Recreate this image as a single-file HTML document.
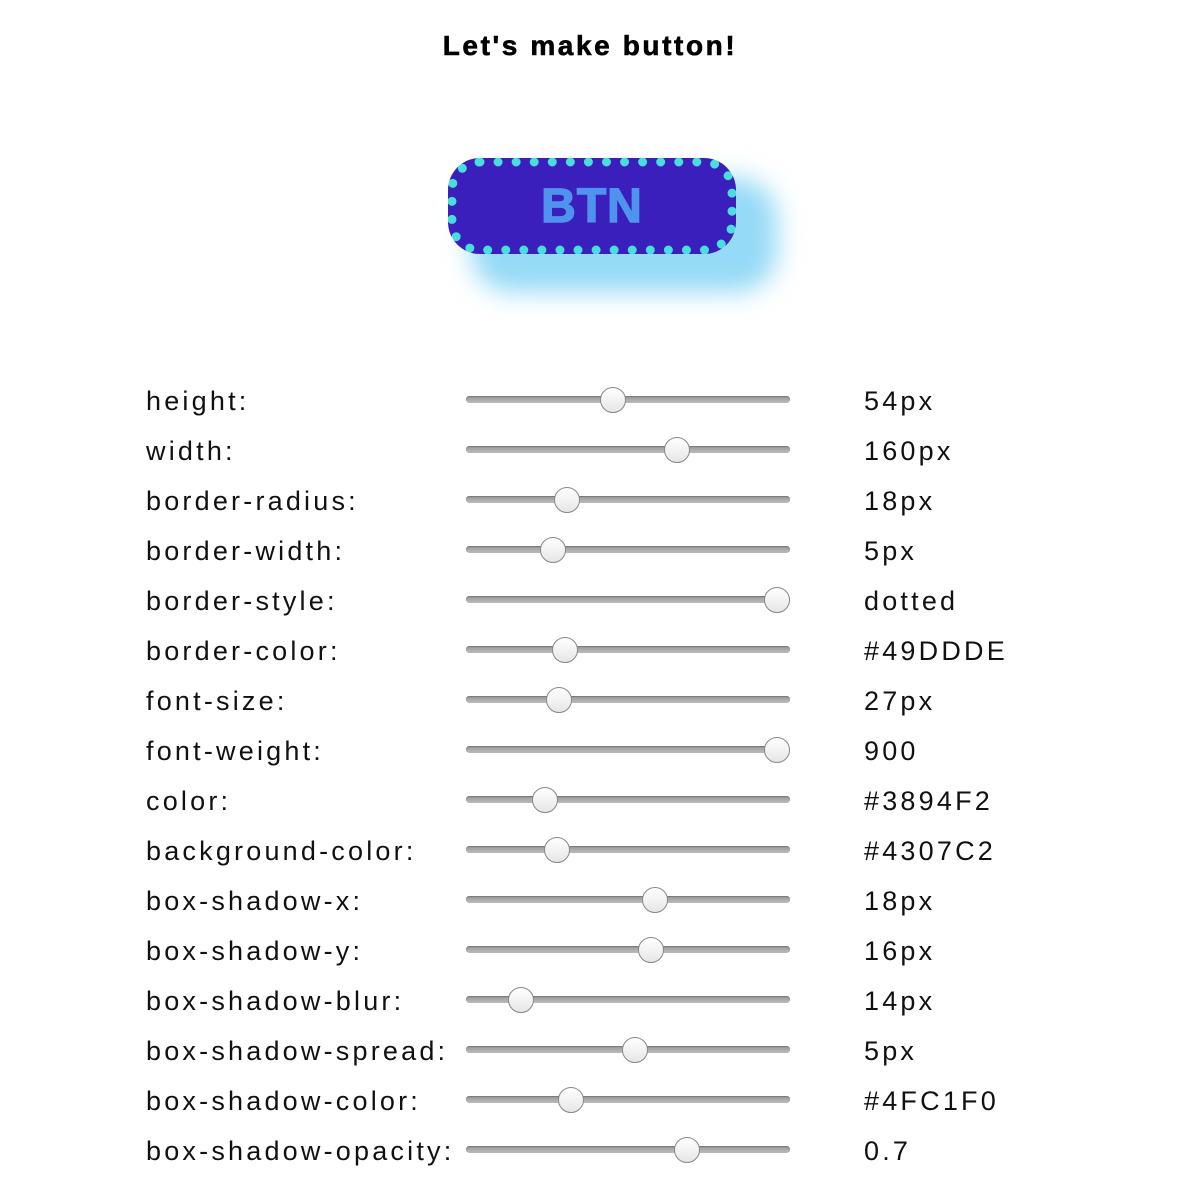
<!DOCTYPE html>
<html><head><style>
body{margin:0;width:1180px;height:1180px;background:#fff;font-family:"Liberation Sans",sans-serif;position:relative;overflow:hidden}
h1{position:absolute;top:30px;left:0;width:1180px;text-align:center;font-size:28px;font-weight:900;margin:0;letter-spacing:2.6px;color:#000;-webkit-text-stroke:0.6px #000}
.btn{position:absolute;left:448px;top:158px;width:288px;height:96px;box-sizing:border-box;border-radius:32px;border:9px dotted #49DDDE;background:#3a1fbc;color:#4f93ee;font-weight:900;font-size:48px;display:flex;align-items:center;justify-content:center;letter-spacing:1px;box-shadow:32px 29px 25px 9px rgba(79,193,240,.6);-webkit-text-stroke:1.5px #4f93ee}
.row{position:absolute;left:0;width:1180px;height:50px}
.lab{position:absolute;left:146px;top:-14px;font-size:27px;letter-spacing:3.2px;color:#111}
.val{position:absolute;left:864px;top:-14px;font-size:27px;letter-spacing:3.2px;color:#111}
.tr{position:absolute;left:466px;width:324px;top:-4px;height:7px;border-radius:4px;background:linear-gradient(#999,#bbb);box-shadow:inset 0 1px 1px #777}
.th{position:absolute;top:-13px;width:24px;height:24px;border-radius:50%;border:1.5px solid #888;background:linear-gradient(#fff,#e6e6e6)}
</style></head><body>
<h1>Let's make button!</h1>
<div class="btn">BTN</div>
<div class="row" style="top:400px"><span class="lab">height:</span><div class="tr"></div><div class="th" style="left:600px"></div><span class="val">54px</span></div>
<div class="row" style="top:450px"><span class="lab">width:</span><div class="tr"></div><div class="th" style="left:664px"></div><span class="val">160px</span></div>
<div class="row" style="top:500px"><span class="lab">border-radius:</span><div class="tr"></div><div class="th" style="left:554px"></div><span class="val">18px</span></div>
<div class="row" style="top:550px"><span class="lab">border-width:</span><div class="tr"></div><div class="th" style="left:540px"></div><span class="val">5px</span></div>
<div class="row" style="top:600px"><span class="lab">border-style:</span><div class="tr"></div><div class="th" style="left:764px"></div><span class="val">dotted</span></div>
<div class="row" style="top:650px"><span class="lab">border-color:</span><div class="tr"></div><div class="th" style="left:552px"></div><span class="val">#49DDDE</span></div>
<div class="row" style="top:700px"><span class="lab">font-size:</span><div class="tr"></div><div class="th" style="left:546px"></div><span class="val">27px</span></div>
<div class="row" style="top:750px"><span class="lab">font-weight:</span><div class="tr"></div><div class="th" style="left:764px"></div><span class="val">900</span></div>
<div class="row" style="top:800px"><span class="lab">color:</span><div class="tr"></div><div class="th" style="left:532px"></div><span class="val">#3894F2</span></div>
<div class="row" style="top:850px"><span class="lab">background-color:</span><div class="tr"></div><div class="th" style="left:544px"></div><span class="val">#4307C2</span></div>
<div class="row" style="top:900px"><span class="lab">box-shadow-x:</span><div class="tr"></div><div class="th" style="left:642px"></div><span class="val">18px</span></div>
<div class="row" style="top:950px"><span class="lab">box-shadow-y:</span><div class="tr"></div><div class="th" style="left:638px"></div><span class="val">16px</span></div>
<div class="row" style="top:1000px"><span class="lab">box-shadow-blur:</span><div class="tr"></div><div class="th" style="left:508px"></div><span class="val">14px</span></div>
<div class="row" style="top:1050px"><span class="lab">box-shadow-spread:</span><div class="tr"></div><div class="th" style="left:622px"></div><span class="val">5px</span></div>
<div class="row" style="top:1100px"><span class="lab">box-shadow-color:</span><div class="tr"></div><div class="th" style="left:558px"></div><span class="val">#4FC1F0</span></div>
<div class="row" style="top:1150px"><span class="lab">box-shadow-opacity:</span><div class="tr"></div><div class="th" style="left:674px"></div><span class="val">0.7</span></div>
</body></html>
